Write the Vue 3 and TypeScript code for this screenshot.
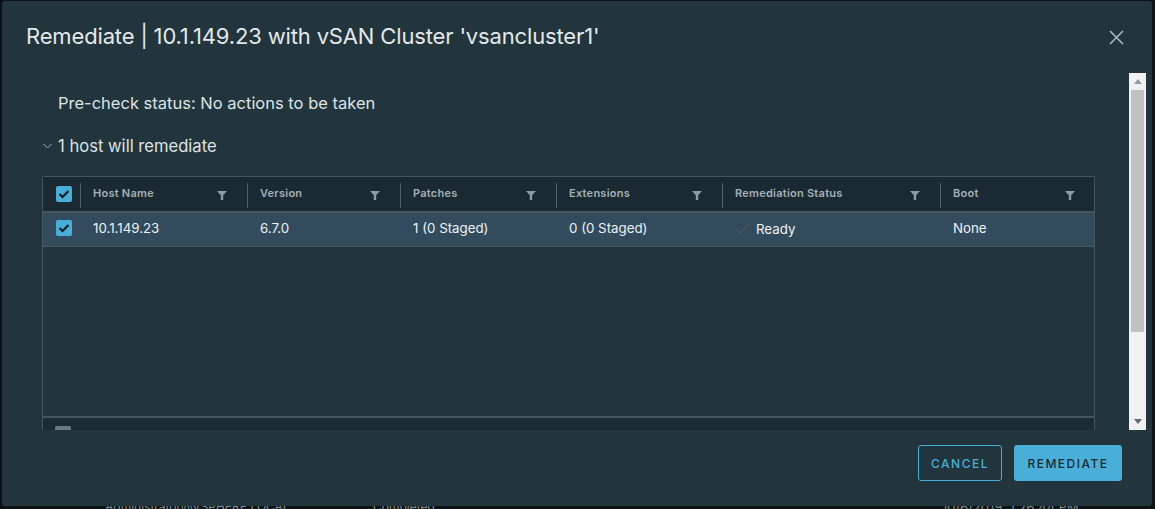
<script setup lang="ts">
interface Col { key: string; label: string; width: number; value: string }
const columns: Col[] = [
  { key: 'host', label: 'Host Name', width: 166, value: '10.1.149.23' },
  { key: 'version', label: 'Version', width: 153, value: '6.7.0' },
  { key: 'patches', label: 'Patches', width: 156, value: '1 (0 Staged)' },
  { key: 'ext', label: 'Extensions', width: 166, value: '0 (0 Staged)' },
  { key: 'status', label: 'Remediation Status', width: 218, value: 'Ready' },
  { key: 'boot', label: 'Boot', width: 155, value: 'None' }
]
</script>

<template>
  <div class="page">
    <div class="behind">
      <span class="b1">Administrator@VSPHERE.LOCAL</span>
      <span class="b2">Completed</span>
      <span class="b3">10/6/2019, 1:26:44 PM</span>
    </div>
    <div class="modal">
      <header class="head">
        <h1 class="title">Remediate | 10.1.149.23 with vSAN Cluster 'vsancluster1'</h1>
        <svg class="close" width="15" height="15" viewBox="0 0 15 15" aria-label="Close">
          <path d="M1 1L14 14M14 1L1 14" stroke="#aebbc2" stroke-width="1.5" fill="none" />
        </svg>
      </header>
      <div class="body">
        <div class="scroll">
          <p class="status">Pre-check status: No actions to be taken</p>
          <div class="section">
            <svg class="chev" width="9" height="6" viewBox="0 0 9 6">
              <path d="M0.5 1L4.5 5L8.5 1" stroke="#9fb0b8" stroke-width="1" fill="none" />
            </svg>
            <span>1 host will remediate</span>
          </div>
          <div class="grid">
            <div class="row hrow">
              <div class="cbcell">
                <span class="cb"><svg width="12" height="10" viewBox="0 0 12 10"><path d="M1.5 5L4.5 8L10.5 2" stroke="#10202a" stroke-width="2.2" fill="none" /></svg></span>
              </div>
              <div v-for="c in columns" :key="c.key" class="hcell" :style="{ width: c.width + 'px' }">
                <span>{{ c.label }}</span>
                <svg class="filter" width="10" height="9" viewBox="0 0 10 9"><path d="M0 0H10L6.2 4.2V9H3.8V4.2Z" fill="#8d9ba3" /></svg>
              </div>
            </div>
            <div class="row drow">
              <div class="cbcell">
                <span class="cb"><svg width="12" height="10" viewBox="0 0 12 10"><path d="M1.5 5L4.5 8L10.5 2" stroke="#10202a" stroke-width="2.2" fill="none" /></svg></span>
              </div>
              <div v-for="c in columns" :key="c.key" class="dcell" :style="{ width: c.width + 'px' }">
                <svg v-if="c.key === 'status'" class="tick" width="16" height="11" viewBox="0 0 16 11"><path d="M1 6L5 10L14 1" stroke="#4d5f68" stroke-width="1" fill="none" /></svg>
                <span :class="{ ready: c.key === 'status' }">{{ c.value }}</span>
              </div>
            </div>
            <div class="empty"></div>
            <div class="foot"><span class="foot-cb"></span></div>
          </div>
        </div>
        <div class="bar">
          <div class="arrow"><svg width="8" height="5" viewBox="0 0 8 5"><path d="M4 0L8 5H0Z" fill="#8d9aa3" /></svg></div>
          <div class="track"><div class="thumb"></div></div>
          <div class="arrow"><svg width="8" height="5" viewBox="0 0 8 5"><path d="M0 0H8L4 5Z" fill="#5c6b74" /></svg></div>
        </div>
      </div>
      <footer class="actions">
        <button class="btn cancel" type="button">CANCEL</button>
        <button class="btn primary" type="button">REMEDIATE</button>
      </footer>
    </div>
  </div>
</template>

<style scoped>
.page {
  position: relative;
  width: 1155px;
  height: 509px;
  overflow: hidden;
  background: #0d1215;
  font-family: Inter, "Noto Sans", sans-serif;
  padding: 1px 3px 0 2px;
  box-sizing: border-box;
}
.modal {
  position: relative;
  height: 505px;
  background: #22343c;
  border-radius: 3px;
  display: flex;
  flex-direction: column;
}
.head {
  height: 72px;
  display: flex;
  justify-content: space-between;
  align-items: flex-start;
  padding: 0 28px 0 24px;
  flex: none;
}
.title {
  margin: 21px 0 0;
  font-size: 22px;
  line-height: 28px;
  font-weight: 400;
  color: #e3e8ea;
  letter-spacing: -0.15px;
}
.close { margin-top: 29px; }
.body {
  height: 357px;
  flex: none;
  display: flex;
  padding-right: 6px;
  overflow: hidden;
}
.scroll {
  width: 1127px;
  flex: none;
  padding: 0 0 0 40px;
  box-sizing: border-box;
}
.status {
  margin: 20px 0 0 16px;
  font-size: 16.5px;
  line-height: 20px;
  color: #dde3e6;
}
.section {
  margin-top: 23px;
  height: 20px;
  display: flex;
  align-items: center;
  font-size: 16.6px;
  color: #dde3e6;
  font-weight: 400;
}
.chev { margin: 0 6px 0 1px; }
.grid {
  margin-top: 20px;
  width: 1053px;
  border: 1px solid #45565f;
  border-bottom: 0;
  border-radius: 2px 2px 0 0;
  box-sizing: border-box;
}
.row { display: flex; }
.hrow {
  height: 36px;
  background: #1b2a32;
  border-bottom: 2px solid #45565f;
  box-sizing: border-box;
}
.drow {
  height: 34px;
  background: #324c5e;
  border-bottom: 1px solid #45565f;
  box-sizing: border-box;
}
.cbcell {
  width: 38px;
  flex: none;
  position: relative;
  display: flex;
  align-items: flex-start;
  justify-content: center;
  box-sizing: border-box;
  padding: 9px 0 0 3px;
}
.drow .cbcell { padding-top: 7px; }
.hrow .cbcell::after, .hcell::before {
  content: "";
  position: absolute;
  top: 6px;
  height: 25px;
  width: 1px;
  background: #4e5f68;
}
.hrow .cbcell::after { right: 0; }
.cb {
  width: 16px;
  height: 16px;
  border-radius: 2px;
  background: #49afd9;
  display: flex;
  align-items: center;
  justify-content: center;
}
.hcell {
  position: relative;
  flex: none;
  display: flex;
  justify-content: space-between;
  align-items: center;
  box-sizing: border-box;
  padding: 0 20px 0 13px;
  font-size: 11px;
  font-weight: 600;
  letter-spacing: 0.25px;
  color: #a4b0b7;
}
.hcell::before { left: 0; }
.hcell:nth-child(2) { padding-left: 12px; }
.hcell:nth-child(2)::before { display: none; }
.hcell span { position: relative; top: -1px; }
.filter { position: relative; top: 1px; }
.dcell {
  flex: none;
  display: flex;
  align-items: center;
  box-sizing: border-box;
  padding: 0 13px 4px;
  font-size: 13.3px;
  color: #eef1f2;
}
.dcell:nth-child(2) { padding-left: 12px; }
.tick { margin-right: 5px; position: relative; top: 1px; }
.ready { position: relative; top: 1px; }
.empty { height: 169px; }
.foot {
  height: 40px;
  background: #1c2b33;
  border-top: 2px solid #45565f;
  box-sizing: border-box;
  padding: 8px 0 0 12px;
}
.foot-cb {
  display: block;
  width: 16px;
  height: 16px;
  border-radius: 2px;
  background: #6b7a82;
}
.bar {
  width: 17px;
  flex: none;
  background: #f1f1f1;
  display: flex;
  flex-direction: column;
}
.arrow {
  height: 17px;
  flex: none;
  display: flex;
  align-items: center;
  justify-content: center;
}
.track { flex: 1; padding: 0 2px; }
.thumb { height: 242px; background: #c1c1c1; }
.actions {
  flex: 1;
  display: flex;
  justify-content: flex-end;
  align-items: flex-start;
  gap: 12px;
  padding: 15px 30px 0 0;
}
.btn {
  height: 36px;
  border-radius: 3px;
  font-family: Inter, "Noto Sans", sans-serif;
  font-size: 12px;
  font-weight: 500;
  letter-spacing: 1.5px;
  padding: 0;
  box-sizing: border-box;
}
.cancel {
  width: 84px;
  background: transparent;
  border: 1px solid #49afd9;
  color: #49afd9;
}
.primary {
  width: 108px;
  background: #49afd9;
  border: 0;
  color: #1b2a32;
}
.behind {
  position: absolute;
  left: 0;
  top: 500px;
  width: 1155px;
  height: 9px;
  overflow: hidden;
  font-size: 12px;
  line-height: 14px;
  color: #7f8d95;
}
.behind span { position: absolute; top: 0; white-space: nowrap; }
.b1 { left: 105px; }
.b2 { left: 373px; }
.b3 { left: 942px; font-size: 13px; }
</style>
